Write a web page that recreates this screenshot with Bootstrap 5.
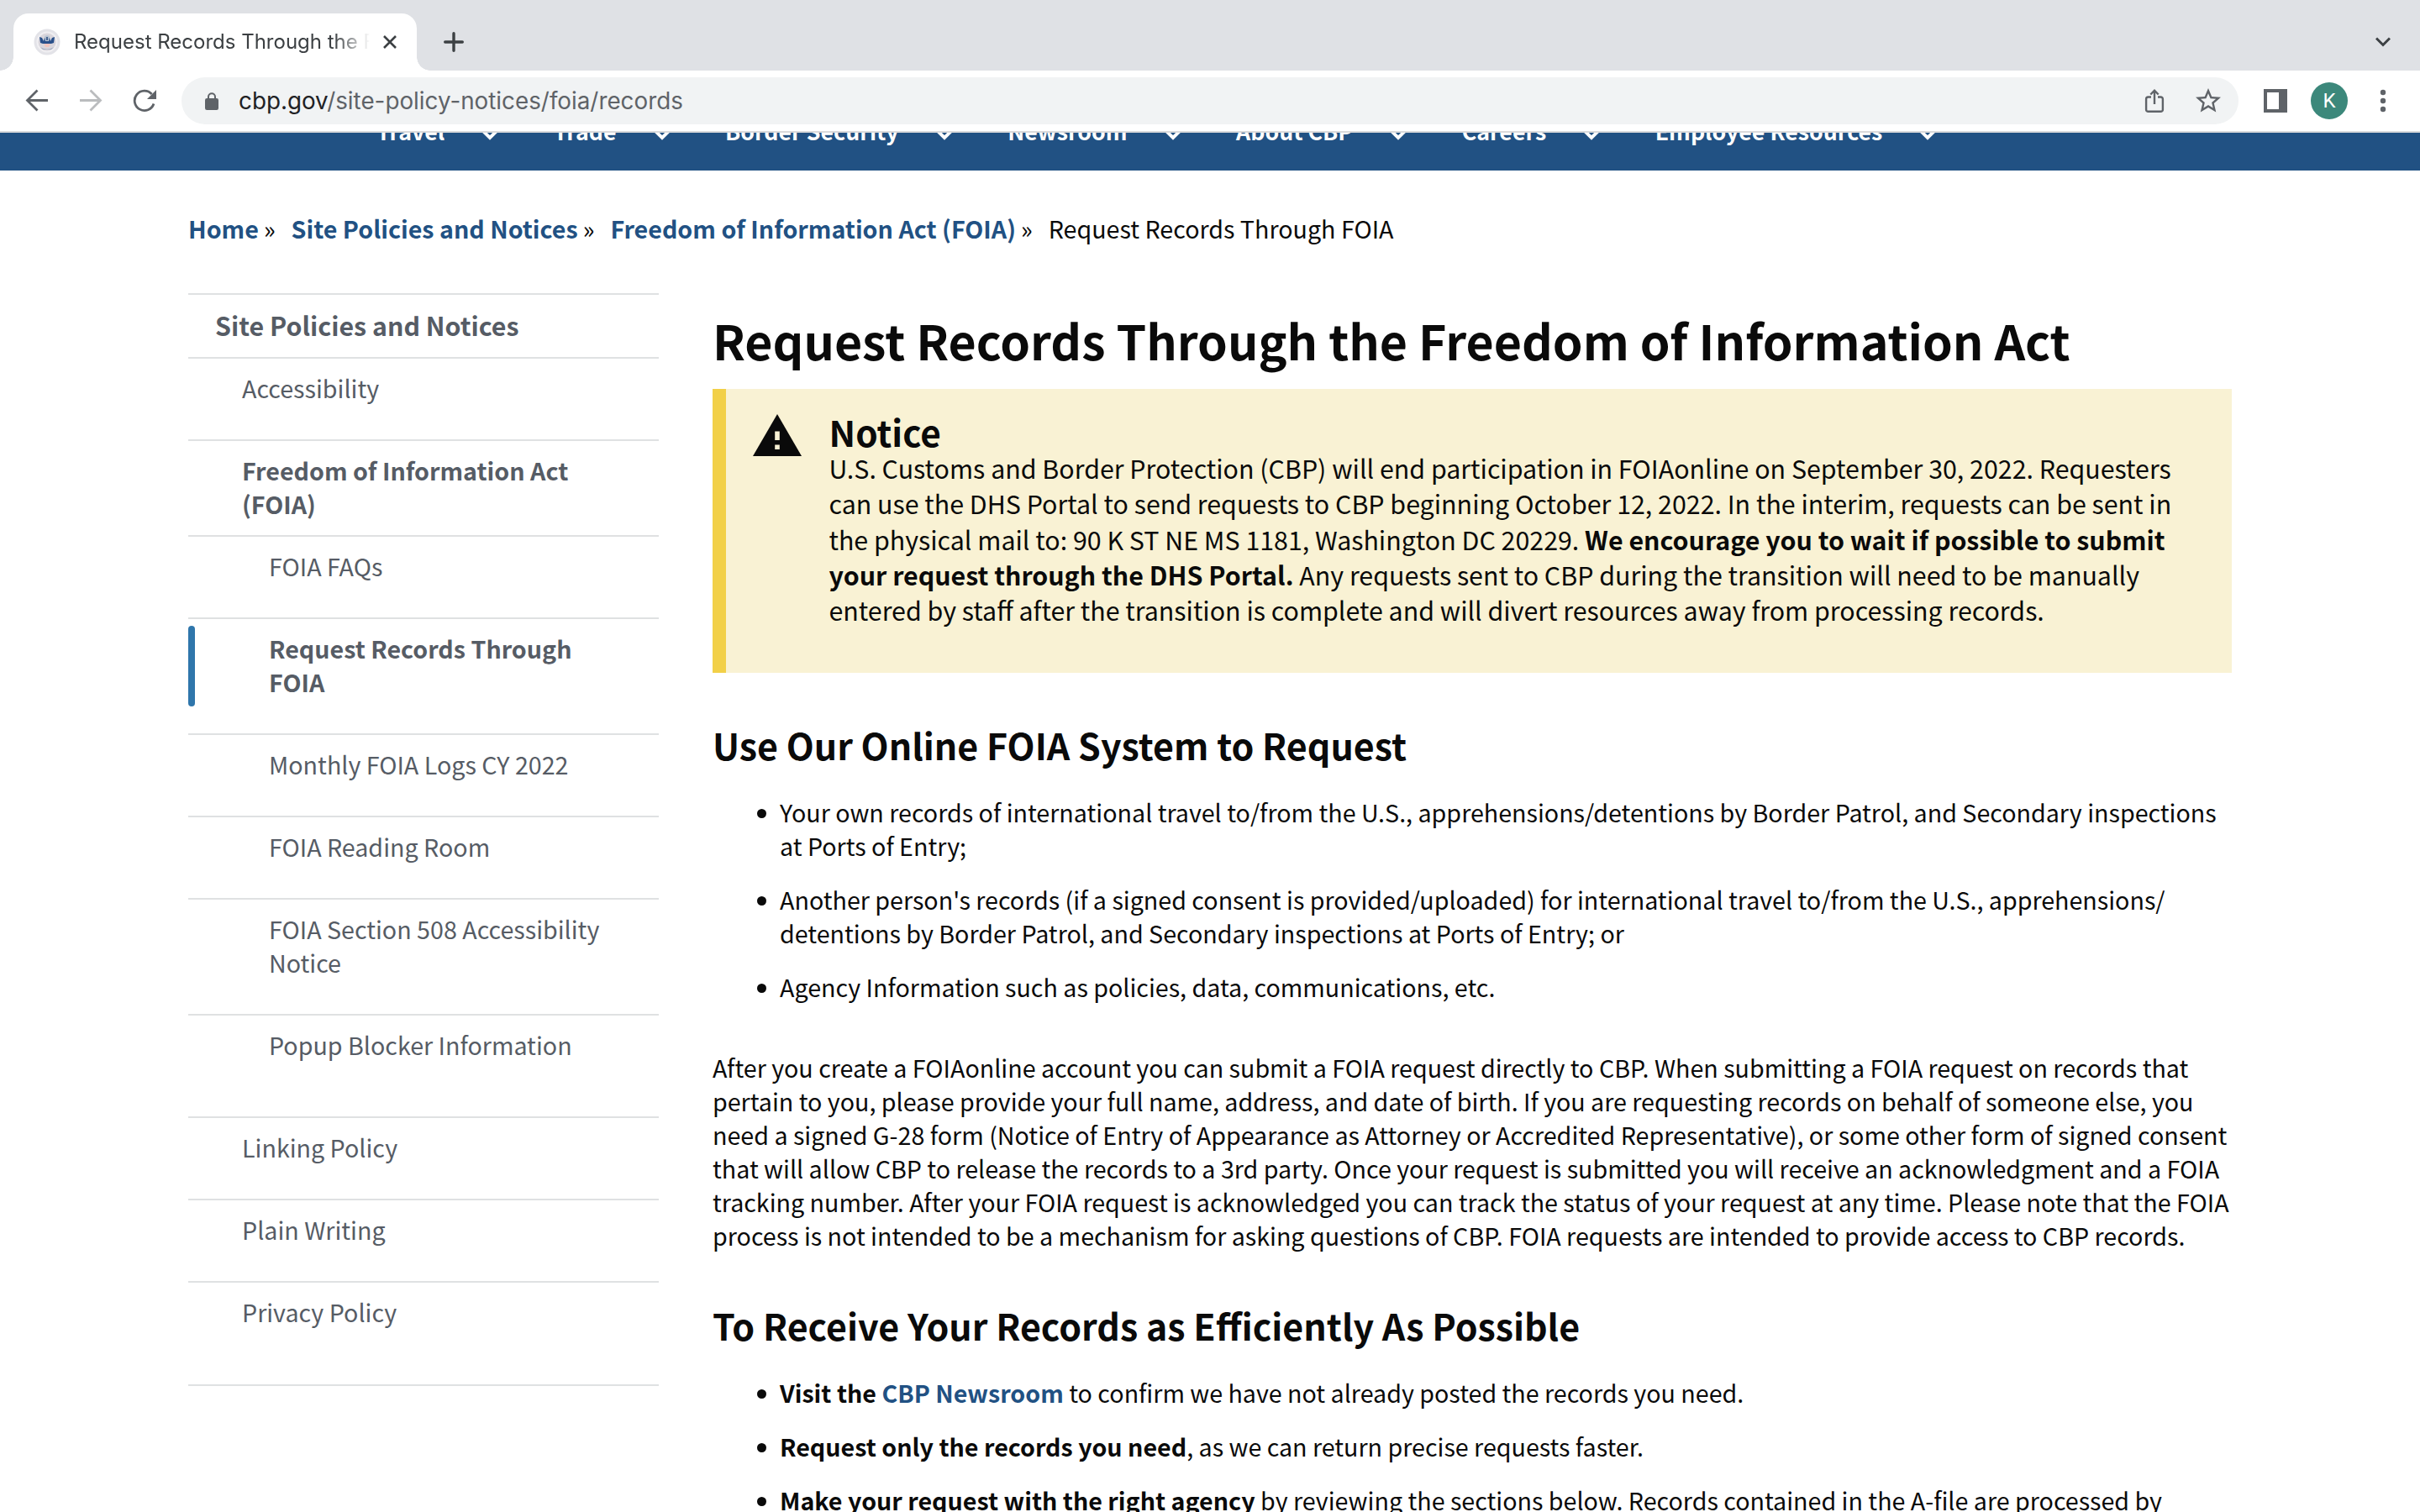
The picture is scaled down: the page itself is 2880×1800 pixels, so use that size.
<!DOCTYPE html>
<html lang="en">
<head>
<meta charset="utf-8">
<title>Request Records Through the Freedom of Information Act</title>
<link href="https://cdn.jsdelivr.net/npm/bootstrap@5.3.0/dist/css/bootstrap.min.css" rel="stylesheet">
<script src="https://cdn.jsdelivr.net/npm/bootstrap@5.3.0/dist/js/bootstrap.bundle.min.js"></script>
<style>
  body { height: 1800px; font-family: "Noto Sans CJK SC", "Noto Sans", sans-serif; font-size: 28.65px; line-height: 40px; color: #0a0a0a; background: #fff; }
  svg { display: block; flex: none; }
  a { color: #215183; text-decoration: none; }

  /* browser chrome */
  .browser { font-family: Inter, "Liberation Sans", sans-serif; }
  .tab-strip { height: 84px; padding: 16px 35px 0 16px; background: #dfe1e5; }
  .page-tab { width: 480px; height: 68px; padding: 0 24px; border-radius: 18px 18px 0 0; background: #fff; }
  .page-tab::before, .page-tab::after { content: ""; position: absolute; bottom: 0; width: 16px; height: 16px; }
  .page-tab::before { right: 100%; background: radial-gradient(circle at 0 0, transparent 15.5px, #fff 16px); }
  .page-tab::after { left: 100%; background: radial-gradient(circle at 100% 0, transparent 15.5px, #fff 16px); }
  .page-tab-title { width: 352px; margin: 0 16px; font-size: 24px; line-height: 32px; color: #3c4043; -webkit-mask-image: linear-gradient(90deg, #000 88%, transparent 100%); mask-image: linear-gradient(90deg, #000 88%, transparent 100%); }
  .new-tab { margin-left: 32px; }
  .toolbar { height: 74px; padding: 0 40px 0 30px; border-bottom: 2px solid #dadadb; }
  .tool-group { gap: 36px; margin-right: 30px; }
  .address { height: 56px; padding: 0 18px 0 28px; background: #f1f3f4; }
  .address-text { margin-left: 24px; font-size: 27.8px; line-height: 34px; color: #5f6368; }
  .address-text span { color: #202124; }
  .star-icon { margin-left: 32px; }
  .panel-icon { margin-left: 30px; }
  .avatar { width: 44px; height: 44px; margin: 0 38px 0 28px; background: #3c887b; color: #fff; font-family: Roboto, sans-serif; font-size: 24px; line-height: 44px; }

  /* site navigation, scrolled partly out of view */
  .site-nav { height: 45px; padding-left: 448px; background: #215183; }
  .site-nav ul { gap: 65.5px; margin-top: -22px; }
  .site-nav a { gap: 44px; color: #fff; font-size: 26.76px; }
  .crumbs { padding: 49px 0 0 224px; }
  .crumbs .sep { margin: 0 19px 0 6px; }

  .page-body { padding: 57px 224px 0; gap: 64px; }
  .side { width: 560px; color: #565c65; }
  .side a { display: block; color: inherit; padding: 15px 64px 17px 32px; }
  .side li, .side-head { border-top: 2px solid #dfe1e2; }
  .side .side-head a { padding-top: 16px; padding-bottom: 18px; font-size: 30.37px; }
  .side ul a { padding-left: 64px; }
  .side ul ul a { padding-left: 96px; }
  .side .spaced { padding-bottom: 24px; }
  .side-end { border-bottom: 2px solid #dfe1e2; padding-bottom: 25px; }
  .current-bar { width: 8px; height: 96px; margin-top: 8px; border-radius: 4px; background: #2f76ab; flex: none; }
  .side ul ul .current-link { padding-left: 88px; padding-bottom: 41px; }

  .article { width: 1808px; padding-top: 17px; }
  h1 { margin: 0 0 21px; font-size: 57.22px; line-height: 76px; }
  h2 { margin: 0 0 34px; font-size: 42.94px; line-height: 54px; }
  .notice { height: 338px; margin-bottom: 58px; padding: 28px 32px 0 32px; border-left: 16px solid #f2d048; background: #f9f2d4; font-size: 30.37px; line-height: 42.3px; }
  .notice svg { margin: 2px 32.5px 0 0; }
  .notice h3 { margin: 0 0 -1px; font-size: 42.3px; line-height: 46px; }
  .article ul { margin: 0; padding-left: 80px; }
  .article li { margin-bottom: 24px; }
  .article li::before { content: ""; display: inline-block; width: 11px; height: 11px; margin: 0 16.5px 0 -27.5px; border-radius: 50%; background: #0a0a0a; vertical-align: 5px; }
  .article .body-copy { margin: 56px 0 59px; }
</style>
</head>
<body class="overflow-hidden">
<header class="browser">
  <div class="tab-strip d-flex align-items-center">
    <div class="page-tab position-relative d-flex align-items-center">
      <svg width="32" height="32" viewBox="0 0 32 32"><circle cx="16" cy="16" r="15.5" fill="#e3e3e8"/><circle cx="16" cy="16" r="12.5" fill="#f0eff2"/><circle cx="16" cy="16" r="10.5" fill="#d9d6dc"/><path d="M7 10l3 1 2 4 1-4 3-2 3 2 1 4 2-4 3-1-1 7-3 1H11l-3-1z" fill="#29508a"/><path d="M13 9l3-1 3 1-1 6h-4z" fill="#b9c4d3"/><path d="M15 10h2v4h-2z" fill="#44618f"/><path d="M12 18h8l-2 4h-4z" fill="#f0c5bf"/><path d="M8 22q8 5 16 0l-3 3H11z" fill="#9eabc0"/></svg>
      <div class="page-tab-title overflow-hidden text-nowrap">Request Records Through the F</div>
      <svg width="16" height="16" viewBox="0 0 16 16" fill="none" stroke="#3c4043" stroke-width="2.6"><path d="M1 1l14 14M15 1L1 15"/></svg>
    </div>
    <svg class="new-tab" width="24" height="24" viewBox="0 0 24 24" fill="none" stroke="#3c4043" stroke-width="3.4" stroke-linecap="round"><path d="M12 1.7v20.6M1.7 12h20.6"/></svg>
    <svg class="ms-auto" width="18" height="12" viewBox="0 0 18 12" fill="none" stroke="#3c4043" stroke-width="3"><path d="M1 1.5l8 8 8-8"/></svg>
  </div>
  <div class="toolbar d-flex align-items-center">
    <div class="tool-group d-flex">
      <svg width="28" height="28" viewBox="0 0 28 28" fill="none" stroke="#5f6368" stroke-width="2.8"><path d="M27 13.5H3M14.5 1.5L2.5 13.5l12 12"/></svg>
      <svg width="28" height="28" viewBox="0 0 28 28" fill="none" stroke="#babcbe" stroke-width="2.8"><path d="M1 13.5h24M13.5 1.5l12 12-12 12"/></svg>
      <svg width="28" height="28" viewBox="0 0 28 28"><path d="M25 17.5A11.7 11.7 0 1 1 22.6 6" fill="none" stroke="#5f6368" stroke-width="2.8"/><path d="M28 1v11H17z" fill="#5f6368"/></svg>
    </div>
    <div class="address d-flex align-items-center flex-grow-1 rounded-pill">
      <svg width="16" height="21" viewBox="0 0 16 21"><path d="M4 8V5.2a4 4 0 0 1 8 0V8" fill="none" stroke="#5f6368" stroke-width="2"/><rect y="7" width="16" height="14" rx="2.2" fill="#5f6368"/></svg>
      <div class="address-text me-auto text-nowrap"><span>cbp.gov</span>/site-policy-notices/foia/records</div>
      <svg width="28" height="30" viewBox="0 0 28 30" fill="none" stroke="#5f6368" stroke-width="2.4"><path d="M10 10.5H6.5a2.4 2.4 0 0 0-2.4 2.4v12.5a2.4 2.4 0 0 0 2.4 2.4h15a2.4 2.4 0 0 0 2.4-2.4V12.9a2.4 2.4 0 0 0-2.4-2.4H18M14 19V3M9.3 7.5L14 2.7l4.7 4.8"/></svg>
      <svg class="star-icon" width="36" height="36" viewBox="0 0 24 24" fill="#5f6368"><path d="M22 9.24l-7.19-.62L12 2 9.19 8.63 2 9.24l5.46 4.73L5.82 21 12 17.27 18.18 21l-1.63-7.03L22 9.24zM12 15.4l-3.76 2.27 1-4.28-3.32-2.88 4.38-.38L12 6.1l1.71 4.04 4.38.38-3.32 2.88 1 4.28L12 15.4z"/></svg>
    </div>
    <svg class="panel-icon" width="28" height="28" viewBox="0 0 28 28"><path d="M0 0h28v28H0zM4 4v20h14V4z" fill="#5f6368" fill-rule="evenodd"/></svg>
    <div class="avatar rounded-circle text-center">K</div>
    <svg width="8" height="28" viewBox="0 0 8 28" fill="#5f6368"><circle cx="4" cy="4" r="3.2"/><circle cx="4" cy="14" r="3.2"/><circle cx="4" cy="24" r="3.2"/></svg>
  </div>
</header>

<nav class="site-nav overflow-hidden">
  <ul class="list-unstyled d-flex fw-bold text-nowrap mb-0">
    <li><a class="d-flex align-items-end" href="#">Travel <svg width="20" height="20" viewBox="0 0 20 20" fill="none" stroke="#fff" stroke-width="4"><path d="M1 -1l9 9 9-9"/></svg></a></li>
    <li><a class="d-flex align-items-end" href="#">Trade <svg width="20" height="20" viewBox="0 0 20 20" fill="none" stroke="#fff" stroke-width="4"><path d="M1 -1l9 9 9-9"/></svg></a></li>
    <li><a class="d-flex align-items-end" href="#">Border Security <svg width="20" height="20" viewBox="0 0 20 20" fill="none" stroke="#fff" stroke-width="4"><path d="M1 -1l9 9 9-9"/></svg></a></li>
    <li><a class="d-flex align-items-end" href="#">Newsroom <svg width="20" height="20" viewBox="0 0 20 20" fill="none" stroke="#fff" stroke-width="4"><path d="M1 -1l9 9 9-9"/></svg></a></li>
    <li><a class="d-flex align-items-end" href="#">About CBP <svg width="20" height="20" viewBox="0 0 20 20" fill="none" stroke="#fff" stroke-width="4"><path d="M1 -1l9 9 9-9"/></svg></a></li>
    <li><a class="d-flex align-items-end" href="#">Careers <svg width="20" height="20" viewBox="0 0 20 20" fill="none" stroke="#fff" stroke-width="4"><path d="M1 -1l9 9 9-9"/></svg></a></li>
    <li><a class="d-flex align-items-end" href="#">Employee Resources <svg width="20" height="20" viewBox="0 0 20 20" fill="none" stroke="#fff" stroke-width="4"><path d="M1 -1l9 9 9-9"/></svg></a></li>
  </ul>
</nav>

<div class="crumbs d-flex text-nowrap">
  <a class="fw-bold" href="#">Home</a><span class="sep">»</span>
  <a class="fw-bold" href="#">Site Policies and Notices</a><span class="sep">»</span>
  <a class="fw-bold" href="#">Freedom of Information Act (FOIA)</a><span class="sep">»</span>
  <span>Request Records Through FOIA</span>
</div>

<div class="page-body d-flex align-items-start">
  <nav class="side flex-shrink-0">
    <div class="side-head fw-bold"><a href="#">Site Policies and Notices</a></div>
    <ul class="list-unstyled side-end mb-0">
      <li class="spaced"><a href="#">Accessibility</a></li>
      <li><a class="fw-bold" href="#">Freedom of Information Act (FOIA)</a>
        <ul class="list-unstyled spaced">
          <li class="spaced"><a href="#">FOIA FAQs</a></li>
          <li class="d-flex align-items-start"><span class="current-bar"></span><a class="current-link fw-bold" href="#">Request Records Through FOIA</a></li>
          <li class="spaced"><a href="#">Monthly FOIA Logs CY 2022</a></li>
          <li class="spaced"><a href="#">FOIA Reading Room</a></li>
          <li class="spaced"><a href="#">FOIA Section 508 Accessibility Notice</a></li>
          <li class="spaced"><a href="#">Popup Blocker Information</a></li>
        </ul>
      </li>
      <li class="spaced"><a href="#">Linking Policy</a></li>
      <li class="spaced"><a href="#">Plain Writing</a></li>
      <li class="spaced"><a href="#">Privacy Policy</a></li>
    </ul>
  </nav>

  <main class="article flex-shrink-0">
    <h1 class="fw-bold">Request Records Through the Freedom of Information Act</h1>
    <div class="notice d-flex align-items-start">
      <svg width="58" height="50" viewBox="0 0 58 50"><path d="M29 0l29 50H0z" fill="#0a0a0a"/><path d="M26.2 20.5h5.6V31h-5.6zM26.2 36.5h5.6V42h-5.6z" fill="#f9f2d4"/></svg>
      <div>
        <h3 class="fw-bold">Notice</h3>
        <p class="mb-0">U.S. Customs and Border Protection (CBP) will end participation in FOIAonline on September 30, 2022. Requesters can use the DHS Portal to send requests to CBP beginning October 12, 2022. In the interim, requests can be sent in the physical mail to: 90 K ST NE MS 1181, Washington DC 20229. <b>We encourage you to wait if possible to submit your request through the DHS Portal.</b> Any requests sent to CBP during the transition will need to be manually entered by staff after the transition is complete and will divert resources away from processing records.</p>
      </div>
    </div>

    <h2 class="fw-bold">Use Our Online FOIA System to Request</h2>
    <ul class="list-unstyled">
      <li>Your own records of international travel to/from the U.S., apprehensions/detentions by Border Patrol, and Secondary inspections at Ports of Entry;</li>
      <li>Another person's records (if a signed consent is provided/uploaded) for international travel to/from the U.S., apprehensions/<wbr>detentions by Border Patrol, and Secondary inspections at Ports of Entry; or</li>
      <li class="mb-0">Agency Information such as policies, data, communications, etc.</li>
    </ul>
    <p class="body-copy">After you create a FOIAonline account you can submit a FOIA request directly to CBP. When submitting a FOIA request on records that pertain to you, please provide your full name, address, and date of birth. If you are requesting records on behalf of someone else, you need a signed G-28 form (Notice of Entry of Appearance as Attorney or Accredited Representative), or some other form of signed consent that will allow CBP to release the records to a 3rd party. Once your request is submitted you will receive an acknowledgment and a FOIA tracking number. After your FOIA request is acknowledged you can track the status of your request at any time. Please note that the FOIA process is not intended to be a mechanism for asking questions of CBP. FOIA requests are intended to provide access to CBP records.</p>
    <h2 class="fw-bold">To Receive Your Records as Efficiently As Possible</h2>
    <ul class="list-unstyled">
      <li><b>Visit the <a href="#">CBP Newsroom</a></b> to confirm we have not already posted the records you need.</li>
      <li><b>Request only the records you need</b>, as we can return precise requests faster.</li>
      <li><b>Make your request with the right agency</b> by reviewing the sections below. Records contained in the A-file are processed by</li>
    </ul>
  </main>
</div>
</body>
</html>
